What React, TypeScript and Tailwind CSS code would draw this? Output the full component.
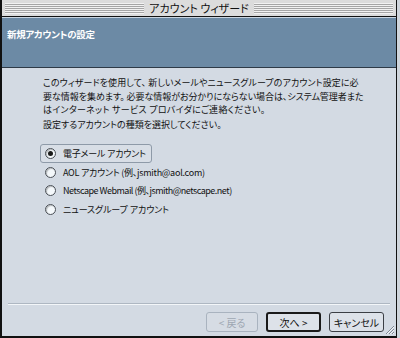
import React from "react";

const jp = "font-['Noto_Sans_CJK_JP','Noto_Sans',sans-serif] [font-feature-settings:'palt']";

function Radio({ checked }: { checked?: boolean }) {
  return (
    <span className="relative flex h-[11px] w-[11px] shrink-0 items-center justify-center rounded-full border border-[#4a4f56] bg-[#f4f8fb] shadow-[inset_1px_1px_1px_rgba(0,0,0,0.25)]">
      {checked && <span className="h-[5px] w-[5px] rounded-full bg-[#1a1a1a]" />}
    </span>
  );
}

export default function App() {
  return (
    <div className={`h-[338px] w-[400px] overflow-hidden bg-[#cfd5dc] ${jp}`}>
      <div className="flex h-[338px] w-[397px] flex-col border-l-2 border-r border-b-2 border-[#111]">
        {/* title bar */}
        <div className="flex h-[17px] shrink-0 items-center border-b border-[#111] bg-[#dcdcdc] px-[3px]">
          <div className="h-[11px] flex-1 bg-[repeating-linear-gradient(to_bottom,#f2f2f2_0px,#f2f2f2_1px,#a6a6a6_1px,#a6a6a6_2px)]" />
          <div className="flex h-[15px] items-center bg-[#dcdcdc] px-[5px] text-[11px] leading-none text-[#111]">
            アカウント ウィザード
          </div>
          <div className="h-[11px] flex-1 bg-[repeating-linear-gradient(to_bottom,#f2f2f2_0px,#f2f2f2_1px,#a6a6a6_1px,#a6a6a6_2px)]" />
        </div>
        {/* header */}
        <div className="flex h-[51px] shrink-0 items-start border-t border-[#c8d4e0] border-b border-b-[#2e3a47] bg-[#6c8aa5] pl-[5px] pt-[10px]">
          <span className="text-[9.5px] font-bold leading-[13px] tracking-[-0.3px] text-white">新規アカウントの設定</span>
        </div>
        {/* body */}
        <div className="flex flex-1 flex-col bg-[#d3dae3]">
          <div className="pl-[41px] pt-[8px] text-[9px] leading-[13.5px] text-[#111] whitespace-nowrap">
            <p>
              <span className="tracking-[0.08px]">このウィザードを使用して、 新しいメールやニュースグループのアカウント設定に必</span>
              <br />
              <span className="tracking-[-0.05px]">要な情報を集めます。 必要な情報がお分かりにならない場合は、システム管理者また</span>
              <br />
              <span className="tracking-[0.3px]">はインターネット サービス プロバイダにご連絡ください。</span>
            </p>
            <p className="mt-[1px]">設定するアカウントの種類を選択してください。</p>
          </div>
          <div className="mt-[13px] flex flex-col pl-[38px] text-[9px] text-[#111] whitespace-nowrap">
            <div className="flex h-[19px] w-[112px] items-center gap-[7px] rounded-[3px] border border-[#8e9aa8] bg-[#d8dee6] pl-[4px]">
              <Radio checked />
              <span className="tracking-[-0.2px]">電子メール アカウント</span>
            </div>
            <div className="flex h-[18.5px] items-center gap-[7px] pl-[5px]">
              <Radio />
              <span className="tracking-[-0.25px]">AOL アカウント (例、jsmith@aol.com)</span>
            </div>
            <div className="flex h-[18.5px] items-center gap-[7px] pl-[5px]">
              <Radio />
              <span className="tracking-[-0.5px]">Netscape Webmail (例、jsmith@netscape.net)</span>
            </div>
            <div className="flex h-[18.5px] items-center gap-[7px] pl-[5px]">
              <Radio />
              <span className="tracking-[-0.1px]">ニュースグループ アカウント</span>
            </div>
          </div>
          <div className="mt-auto px-[6px]">
            <div className="h-[2px] border-t border-[#aeb7c2] border-b border-b-[#f3f6f9]" />
          </div>
          <div className="relative flex h-[31px] items-start justify-end gap-[8px] pr-[12px] pt-[7px] text-[10px]">
            <div className="flex h-[20px] w-[52px] items-center justify-center rounded-[3px] border border-[#a9b3bf] bg-[#d6dce4] text-[#9ea7b2]">
              &lt; 戻る
            </div>
            <div className="flex h-[20px] w-[55px] items-center justify-center rounded-[3px] border-2 border-[#1a1a1a] bg-[#dde2e9] text-[#111]">
              次へ &gt;
            </div>
            <div className="flex h-[20px] w-[55px] items-center justify-center rounded-[3px] border border-[#3b3f45] bg-[#dde2e9] text-[#111]">
              キャンセル
            </div>
            <svg className="absolute bottom-[1px] right-[1px]" width="11" height="11" viewBox="0 0 11 11">
              <path d="M10 2 L2 10 M10 5 L5 10 M10 8 L8 10" stroke="#7d8793" strokeWidth="1" />
              <path d="M10 3 L3 10 M10 6 L6 10 M10 9 L9 10" stroke="#f4f6f9" strokeWidth="1" />
            </svg>
          </div>
        </div>
      </div>
    </div>
  );
}
